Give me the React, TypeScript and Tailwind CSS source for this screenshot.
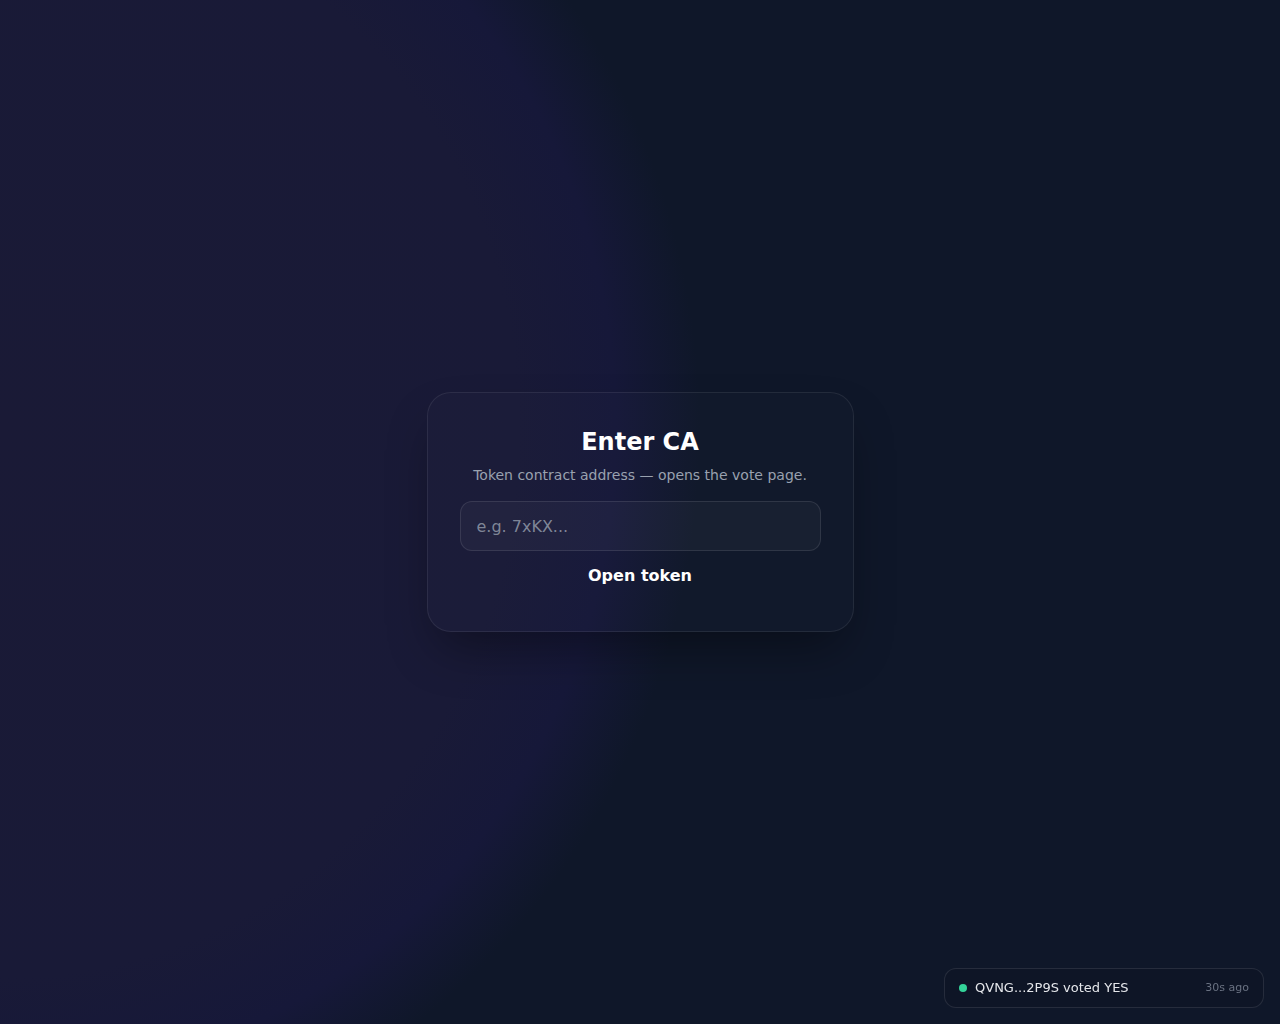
import React from "react";

function VoteToast() {
  return (
    <div className="fixed bottom-4 right-4 flex h-10 w-[320px] items-center justify-between rounded-xl border border-white/10 bg-[#0e1526] px-3.5">
      <div className="flex items-center gap-2">
        <span className="h-2 w-2 rounded-full bg-[#34d399]" />
        <span className="text-[13px] text-gray-200">QVNG...2P9S voted YES</span>
      </div>
      <span className="text-[11px] text-gray-500">30s ago</span>
    </div>
  );
}

export default function App() {
  return (
    <div
      className="relative flex min-h-screen w-full items-center justify-center bg-[#0f1729] bg-[radial-gradient(ellipse_700px_740px_at_0%_42%,#1a1a36_0%,#191a37_74%,#161839_88%,#0f1729_100%)]"
      style={{ fontFamily: '"DejaVu Sans", "Liberation Sans", sans-serif' }}
    >
      <div className="w-[427px] rounded-3xl border border-white/[0.08] bg-white/[0.01] px-8 pt-[33px] pb-[31px] shadow-2xl shadow-black/40">
        <h1 className="text-center text-2xl leading-8 font-bold text-white">
          Enter CA
        </h1>
        <p className="mt-[7px] text-center text-sm text-gray-400">
          Token contract address — opens the vote page.
        </p>
        <input
          type="text"
          placeholder="e.g. 7xKX..."
          className="mt-4 h-[50px] w-full rounded-xl border border-white/10 bg-white/[0.03] px-4 text-base text-white outline-none placeholder:text-gray-400/80"
        />
        <button className="w-full pt-[13px] pb-3 text-center text-base leading-6 font-bold text-white">
          Open token
        </button>
      </div>
      <VoteToast />
    </div>
  );
}
